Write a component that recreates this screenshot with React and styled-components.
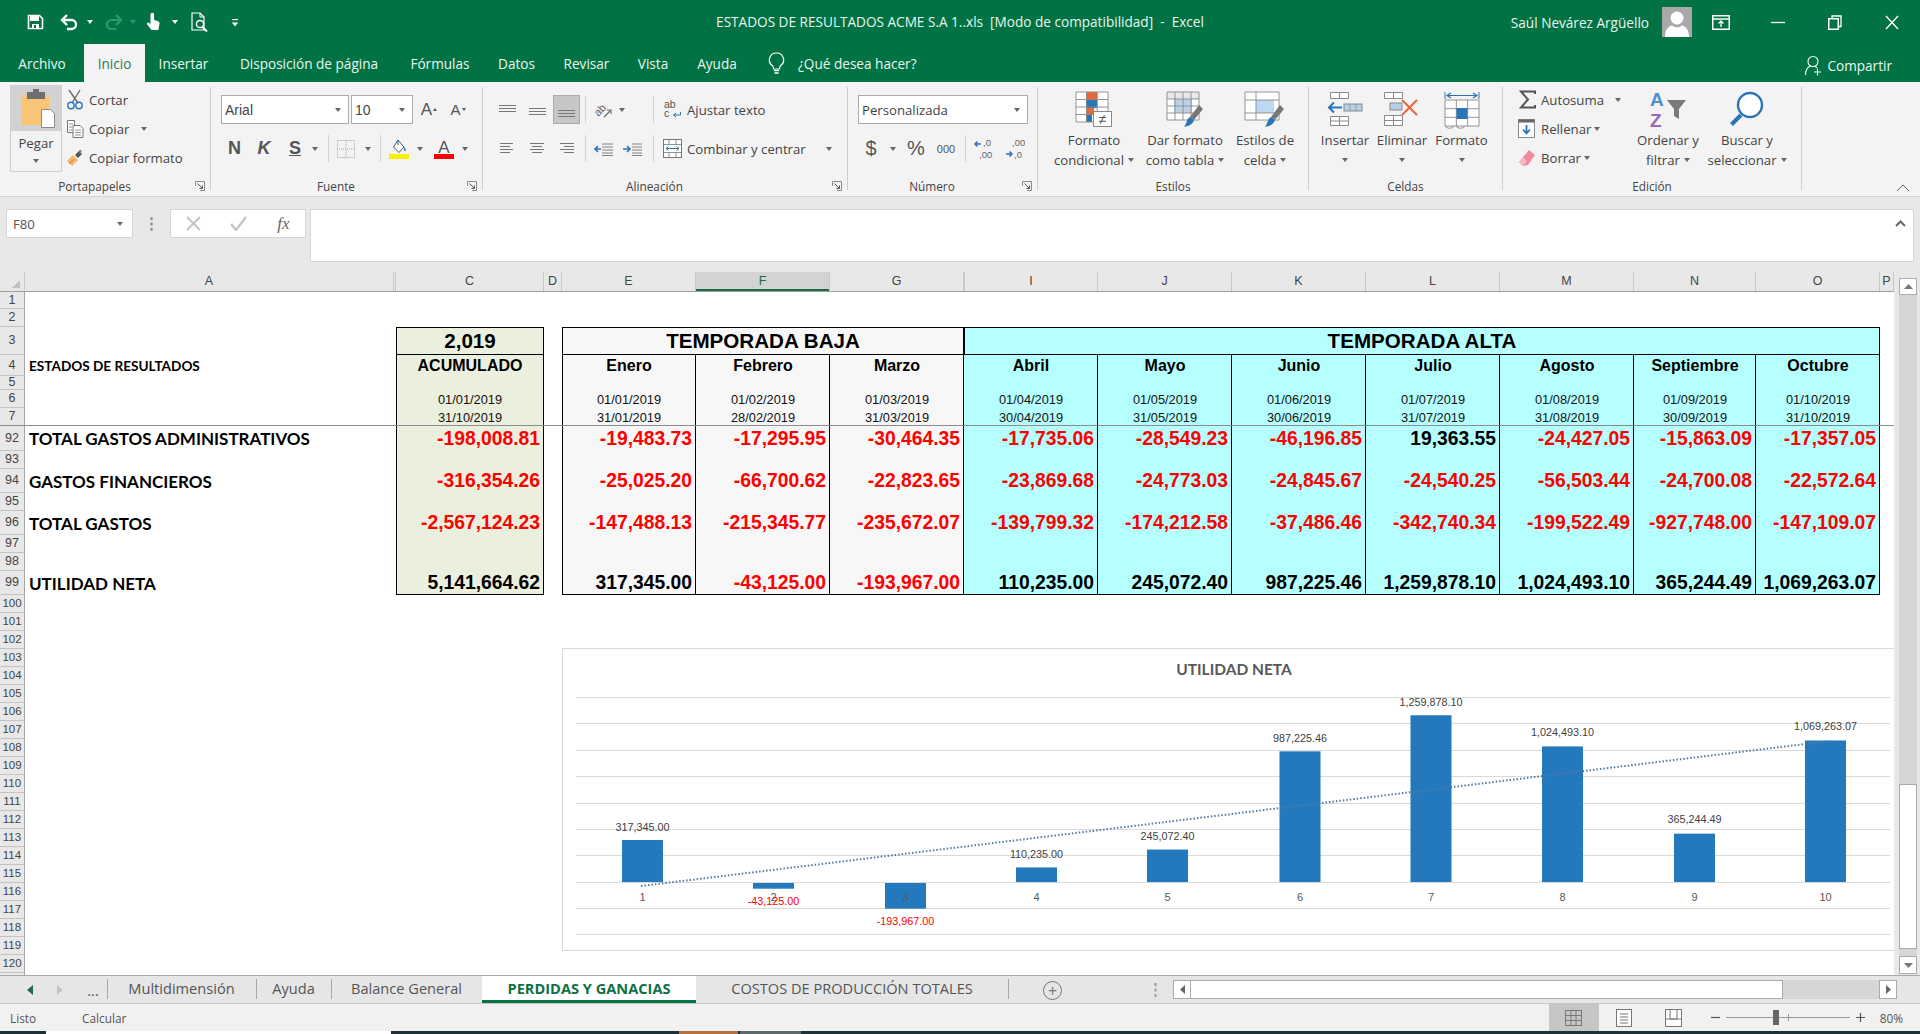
import React from 'react';
import styled, { createGlobalStyle } from 'styled-components';

const GREEN = '#017244';
const UI = '"Open Sans", "Noto Sans", sans-serif';
const ARIAL = '"Liberation Sans", Arial, sans-serif';
const CAL = 'Lato, "Open Sans", sans-serif';

const Global = createGlobalStyle`
  html, body { margin: 0; padding: 0; width: 100%; height: 100%; overflow: hidden; background: #fff; }
  * { box-sizing: border-box; }
`;

const Page = styled.div`
  width: 1920px; height: 1034px; display: flex; flex-direction: column; overflow: hidden;
  font-family: ${UI}; color: #444;
`;

const Svg = styled.svg`display: block; flex: none;`;
const Ic = ({ w, h, children }) => (
  <Svg width={w} height={h} viewBox={`0 0 ${w} ${h}`} fill="none">{children}</Svg>
);

/* ---------- generic pieces ---------- */
const Slot = styled.span`
  display: inline-flex; align-items: center; justify-content: center; flex: none;
  width: ${p => p.$w}px; margin-left: ${p => p.$ml || 0}px;
`;
const Caret = styled.i`
  display: inline-block; width: 0; height: 0; flex: none;
  border-left: 3.5px solid transparent; border-right: 3.5px solid transparent;
  border-top: 4px solid ${p => p.$c || '#666'};
  margin-left: ${p => p.$ml || 0}px;
`;
const VBar = styled.span`
  flex: none; width: 1px; height: 27px; background: #d2d2d2; margin-left: ${p => p.$ml || 0}px;
`;

/* ---------- title bar ---------- */
const TitleBar = styled.header`
  height: 44px; background: ${GREEN}; color: #fff; display: grid; grid-template-columns: 1fr auto 1fr;
  align-items: center; font-size: 14px;
`;
const Qat = styled.div`display: flex; align-items: center; padding-left: 26px; height: 42px;`;
const DocTitle = styled.div`font-size: 13.6px; white-space: pre; color: #e8f5ee; padding-bottom: 2px;`;
const UserArea = styled.div`display: flex; align-items: center; justify-content: flex-end; height: 44px;`;
const UserName = styled.span`font-size: 13.6px; color: #e8f5ee;`;
const Avatar = styled.span`
  width: 30px; height: 30px; margin-left: 13px; background: #a9a9a9; overflow: hidden; display: block;
`;
const WinBtn = styled.span`
  width: 57px; height: 44px; display: flex; align-items: center; justify-content: center;
  &:first-of-type { margin-left: 14px; }
`;

/* ---------- tabs ---------- */
const TabRow = styled.nav`
  height: 38px; background: ${GREEN}; display: flex; align-items: stretch; color: #eaf6f0; font-size: 13.6px;
`;
const Tab = styled.span`
  width: ${p => p.$w}px; display: flex; align-items: center; justify-content: center; flex: none;
  ${p => p.$on && 'background:#f3f3f3;color:#2c7a56;'}
`;
const TellMe = styled.span`display: flex; align-items: center; gap: 13px; margin-left: 16px; color: #eaf6f0;`;
const Share = styled.span`
  margin-left: auto; display: flex; align-items: center; gap: 5px; padding: 4px 28px 0 0;
`;

/* ---------- ribbon ---------- */
const Ribbon = styled.section`
  height: 114px; background: #f3f3f3; display: flex; color: #444; font-size: 13.2px; flex: none;
`;
const Group = styled.div`
  width: ${p => p.$w}px; flex: none; display: flex; flex-direction: column;
`;
const GroupBody = styled.div`
  height: 95px; padding-top: ${p => p.$pt ?? 13}px; padding-left: ${p => p.$pl || 0}px;
  display: ${p => p.$flex ? 'flex' : 'block'}; align-items: flex-start;
`;
const GroupFoot = styled.div`
  height: 18px; display: flex; align-items: center; font-size: 11.8px; color: #444;
`;
const FootLabel = styled.span`flex: 1; text-align: center;`;
const Launcher = styled.span`width: 21px; display: flex; justify-content: center;`;
const GroupSep = styled.span`flex: none; width: 1px; background: #cfcfcf; margin: 5px 0 6px;`;
const ToolRow = styled.div`
  display: flex; align-items: center; height: 29px; margin-top: ${p => p.$mt || 0}px;
`;
const Select = styled.span`
  width: ${p => p.$w}px; margin-left: ${p => p.$ml || 0}px; height: 29px; flex: none;
  background: #fff; border: 1px solid #ababab; display: flex; align-items: center;
  justify-content: space-between; padding: 0 7px 0 3px; font-size: 13.4px;
`;
const SelFont = styled.span`font-family: ${p => p.$arial ? ARIAL : UI}; font-size: ${p => p.$arial ? 14 : 13.2}px;`;
const Toggle = styled.span`
  width: 27px; height: 29px; margin-left: ${p => p.$ml || 0}px; flex: none; background: #c6c6c6;
  border: 1px solid #ababab; display: flex; align-items: center; justify-content: center;
`;
const Letter = styled.span`
  font-family: ${ARIAL}; font-weight: ${p => p.$b ? 700 : 400}; font-style: ${p => p.$i ? 'italic' : 'normal'};
  text-decoration: ${p => p.$u ? 'underline' : 'none'}; font-size: ${p => p.$s || 16}px; color: ${p => p.$c || '#555'};
`;
const Grow = styled.span`
  display: flex; align-items: flex-start;
`;
const TinyUp = styled.i`
  display: inline-block; width: 0; height: 0; margin: 0 0 0 1px;
  border-left: 2.5px solid transparent; border-right: 2.5px solid transparent;
  ${p => p.$down ? 'border-top: 3px solid #555;' : 'border-bottom: 3px solid #555;'}
`;
const RowText = styled.span`
  margin-left: ${p => p.$ml || 0}px; width: ${p => p.$w ? p.$w + 'px' : 'auto'}; white-space: nowrap; flex: none;
`;

const Paste = styled.div`
  width: 52px; height: 87px; margin-left: 10px; flex: none; border: 1px solid #cfcfcf; border-top: 0;
  display: flex; flex-direction: column; align-items: center; text-align: center;
`;
const PasteTop = styled.div`width: 52px; margin-left: -1px; margin-right: -1px; height: 46px; background: #d2d2d2; flex: none;`;
const PasteLabel = styled.span`margin-top: 2px; line-height: 20px;`;
const PasteCaret = styled.span`margin-top: 6px; display: flex;`;
const ListCol = styled.div`
  margin-left: ${p => p.$ml || 0}px; width: ${p => p.$w ? p.$w + 'px' : 'auto'}; flex: none;
`;

const Big = styled.div`
  width: ${p => p.$w}px; margin-left: ${p => p.$ml || 0}px; flex: none; display: flex; flex-direction: column;
  align-items: center; white-space: nowrap;
`;
const BigIcon = styled.div`height: 48px; padding-top: 9px; display: flex; justify-content: center;`;
const BigLine = styled.span`
  height: 20px; line-height: 20px; display: flex; align-items: center; gap: 4px;
`;
const CollapseArea = styled.div`flex: 1; display: flex; align-items: flex-end; justify-content: flex-end; padding: 0 10px 4px 0;`;

/* ---------- formula bar ---------- */
const FormulaBar = styled.section`
  height: 76px; flex: none; background: #e8e8e8; border-top: 1px solid #d4d4d4; padding: 12px 6px 0 6px;
  display: flex; align-items: flex-start;
`;
const NameBox = styled.div`
  width: 127px; height: 29px; background: #fff; border: 1px solid #d6d6d6; display: flex; align-items: center;
  justify-content: space-between; padding: 0 9px 0 6px; font-size: 13.2px; color: #555; flex: none;
`;
const Dots = styled.span`width: 37px; display: flex; justify-content: center; height: 29px; align-items: center; flex: none;`;
const FxBox = styled.div`
  width: 136px; height: 29px; background: #fff; border: 1px solid #d6d6d6; display: flex; align-items: center; flex: none;
`;
const FxSlot = styled(Slot)``;
const FxGlyph = styled.span`
  font-family: "Liberation Serif", serif; font-style: italic; font-size: 17px; color: #666;
`;
const FormulaInput = styled.div`
  width: 1604px; margin-left: 4px; height: 53px; background: #fff; border: 1px solid #d6d6d6; flex: none;
  display: flex; justify-content: flex-end; padding: 10px 7px 0 0;
`;

/* ---------- sheet ---------- */
const COLS = '25px 369px 2px 148px 18px 134px 134px 134px 134px 134px 134px 134px 134px 122px 124px 14px';
const HEIGHTS = [17, 18, 28, 21, 14, 18, 18, 25, 18, 24, 18, 24, 18, 18, 24];
const ROWS = [...HEIGHTS, ...Array(22).fill(18)].map(h => h + 'px').join(' ');

const Work = styled.div`display: flex; height: 703px; flex: none;`;
const SheetCol = styled.div`width: 1894px; flex: none; display: flex; flex-direction: column;`;
const ColHead = styled.div`
  height: 20px; flex: none; display: grid; grid-template-columns: ${COLS}; background: #e8e8e8;
  border-bottom: 1px solid #9e9e9e;
`;
const ColCell = styled.span`
  display: flex; align-items: center; justify-content: center; font-family: ${ARIAL}; font-size: 12.5px; color: #444;
  border-right: 1px solid #c8c8c8; line-height: 1;
  ${p => p.$sel && 'background:#d3d3d3;color:#1d6b47;box-shadow: inset 0 -2px 0 #1d6b47;'}
  ${p => p.$dbl && 'border-left:1px solid #c8c8c8;'}
`;
const Corner = styled.span`
  border-right: 1px solid #c8c8c8; display: flex; align-items: flex-end; justify-content: flex-end; padding: 0 4px 3px 0;
`;
const SheetBody = styled.div`
  position: relative; height: 683px; overflow: hidden; background: #fff;
`;
const Grid = styled.div`
  display: grid; grid-template-columns: ${COLS}; grid-template-rows: ${ROWS};
`;
const RowHead = styled.span`
  grid-column: 1; grid-row: ${p => p.$r}; background: #e8e8e8; border-right: 1px solid #a6a6a6;
  border-bottom: 1px solid #c4c4c4; display: flex; align-items: center; justify-content: center;
  font-family: ${ARIAL}; font-size: ${p => p.$small ? 11.5 : 12.5}px; color: #444; line-height: 1; overflow: hidden;
`;
const Band = styled.div`
  grid-column: ${p => p.$c}; grid-row: 4 / 16; background: ${p => p.$bg};
  border-right: 1px solid #000; border-bottom: 1px solid #000;
  ${p => p.$first && 'border-left: 1px solid #000;'}
`;
const Banner = styled.div`
  grid-column: ${p => p.$c} / span ${p => p.$span}; grid-row: 3; background: ${p => p.$bg};
  border: 1px solid #000; display: flex; align-items: center; justify-content: center;
  font-family: ${ARIAL}; font-weight: 700; font-size: 20.6px; color: #000;
`;
const MonthCell = styled.div`
  grid-column: ${p => p.$c}; grid-row: ${p => p.$r}; display: flex; align-items: center; justify-content: center;
  font-family: ${ARIAL}; font-weight: 700; font-size: 16px; color: #000;
`;
const DateCell = styled.div`
  grid-column: ${p => p.$c}; grid-row: ${p => p.$r}; display: flex; align-items: center; justify-content: center;
  font-family: ${ARIAL}; font-size: 12.8px; color: #111; padding-top: 1px;
`;
const Value = styled.div`
  grid-column: ${p => p.$c}; grid-row: ${p => p.$r}; display: flex; align-items: center; justify-content: flex-end;
  padding-right: 4px; font-family: ${ARIAL}; font-weight: 700; font-size: 19.3px; color: ${p => p.$neg ? '#f00' : '#000'};
  white-space: nowrap;
`;
const RowLabel = styled.div`
  grid-column: 2; grid-row: ${p => p.$r}; display: flex; align-items: center; padding-left: 4px;
  font-family: ${CAL}; font-weight: 700; font-size: ${p => p.$s || 17}px; color: #000; white-space: nowrap;
`;
const FreezeLine = styled.div`
  grid-column: 1 / -1; grid-row: 7; align-self: end; height: 1px; background: #8c8c8c; position: relative;
`;
const ChartFrame = styled.div`
  position: absolute; left: 562px; top: 356px; width: 1332px; height: 303px; background: #fff;
  border: 1px solid #d9d9d9; border-right: 0;
`;

const VScroll = styled.aside`
  width: 26px; flex: none; background: #e8e8e8; padding: 6px 3px 1px 5px; display: flex;
`;
const VTrack = styled.div`
  flex: 1; background: #d6d6d6; display: flex; flex-direction: column; justify-content: flex-start;
`;
const VBtn = styled.div`
  height: ${p => p.$h}px; flex: none; background: #fff; border: 1px solid #ababab; display: flex;
  align-items: center; justify-content: center;
`;
const VThumb = styled.div`height: 165px; flex: none; background: #fff; border: 1px solid #ababab; margin-top: auto; margin-bottom: 7px;`;

/* ---------- sheet tabs + status ---------- */
const TabBar = styled.section`
  height: 29px; flex: none; background: #e6e6e6; border-top: 1px solid #a8a8a8; border-bottom: 1px solid #c6c6c6;
  display: flex; align-items: stretch; font-size: 14.6px; color: #555;
`;
const NavSlot = styled(Slot)`align-self: center;`;
const SheetTab = styled.span`
  width: ${p => p.$w}px; flex: none; display: flex; align-items: center; justify-content: center; white-space: nowrap;
  padding-bottom: 3px; position: relative;
  ${p => p.$on ? `background:#fff;color:#0f7045;font-weight:700;border-bottom:3px solid ${GREEN};padding-bottom:0;` : ''}
  ${p => p.$sep ? `&::before{content:'';position:absolute;left:0;top:3px;height:20px;width:1px;background:#a6a6a6;}` : ''}
`;
const TabEndBar = styled.span`width: 1px; height: 20px; background: #a6a6a6; align-self: flex-start; margin-top: 3px; flex: none;`;
const AddSheet = styled.span`
  width: 19px; height: 19px; border: 1px solid #777; border-radius: 50%; margin-left: 34px; align-self: center; flex: none;
  display: flex; align-items: center; justify-content: center; color: #777; font-size: 16px; line-height: 1; margin-top: 2px;
`;
const HScroll = styled.div`
  margin-left: 0; width: 724px; height: 19px; align-self: flex-start; margin-top: 4px; background: #d6d6d6;
  display: flex; flex: none;
`;
const HEnd = styled.span`
  width: 18px; flex: none; background: #fff; border: 1px solid #ababab; display: flex; align-items: center; justify-content: center;
`;
const HThumb = styled.span`width: 592px; flex: none; background: #fff; border: 1px solid #ababab; border-left: 0;`;

const StatusBar = styled.footer`
  height: 27px; flex: none; background: #f1f1f1; display: flex; align-items: stretch; font-size: 11.8px; color: #555;
`;
const StatusText = styled.span`align-self: center; margin-left: ${p => p.$ml}px; flex: none;`;
const ViewBtn = styled.span`
  width: 50px; flex: none; display: flex; align-items: center; justify-content: center;
  ${p => p.$on && 'background:#c6c6c6;'} margin-left: ${p => p.$ml || 0}px;
`;
const ZoomWrap = styled.span`display: flex; align-items: center; margin-left: 12px;`;
const ZoomTrack = styled.span`
  width: 124px; height: 1px; background: #999; margin: 0 6px; position: relative; display: block;
`;
const ZoomThumb = styled.span`
  position: absolute; left: 47px; top: -7px; width: 6px; height: 15px; background: #666;
`;
const ZoomTick = styled.span`
  position: absolute; left: 62px; top: -3px; width: 1px; height: 7px; background: #999;
`;
const ZoomPct = styled.span`margin-left: 15px;`;
const TaskStrip = styled.div`height: 3px; flex: 1; background: #1e3038; display: flex; overflow: hidden;`;
const TaskPiece = styled.span`
  height: 3px; width: ${p => p.$w}px; margin-left: ${p => p.$ml}px; background: ${p => p.$c}; flex: none;
`;

/* ---------- icons ---------- */
const W = '#fff';
const SaveI = () => <Ic w={17} h={16}><path d="M1.5 1.5h11l3 3v10h-14z" stroke={W} strokeWidth="1.6"/><rect x="3" y="2" width="9" height="5" fill={W}/><rect x="5" y="10" width="7" height="5" fill={W}/><rect x="7" y="11" width="2" height="3" fill={GREEN}/></Ic>;
const UndoI = ({ c = W }) => <Ic w={20} h={17}><path d="M2.5 6h9a4.5 4.5 0 0 1 0 9H7" stroke={c} strokeWidth="2.4"/><path d="M7 1L2 6l5 5" stroke={c} strokeWidth="2.4"/></Ic>;
const RedoI = ({ c = '#2f9a6c' }) => <Ic w={20} h={17}><path d="M17.5 6h-9a4.5 4.5 0 0 0 0 9H13" stroke={c} strokeWidth="2.2"/><path d="M13 1l5 5-5 5" stroke={c} strokeWidth="2.2"/></Ic>;
const TouchI = () => <Ic w={15} h={20}><path d="M4.5 2.5a1.8 1.8 0 0 1 3.6 0v5.6l3.5 1c1.6.5 2.2 1.6 1.9 3L12.4 18H5.6L1.2 12.5c-.9-1.3.8-2.8 2-1.6l1.3 1.3z" fill={W}/></Ic>;
const PreviewI = () => <Ic w={19} h={21}><path d="M1 1h8l4 4v13H1z" stroke={W} strokeWidth="1.2"/><path d="M9 1v4h4" stroke={W}/><circle cx="9" cy="12" r="3.6" stroke={W} strokeWidth="1.5"/><path d="M11.5 15l4.5 4.5" stroke={W} strokeWidth="2"/></Ic>;
const CustomI = () => <Ic w={8} h={9}><rect x="1" y="1" width="6" height="1.2" fill={W}/><path d="M0.8 4.5h6.4L4 8.5z" fill={W}/></Ic>;
const PersonI = () => <Ic w={30} h={30}><circle cx="15" cy="11" r="6.5" fill={W}/><path d="M3 30c0-8 4-11 7-11.5 3 2.500 7 2.500 10 0 3 .5 7 3.500 7 11.500z" fill={W}/></Ic>;
const RibbonOptI = () => <Ic w={18} h={15}><rect x=".75" y=".75" width="16.500" height="13.500" stroke={W} strokeWidth="1.5"/><path d="M1 4h16" stroke={W} strokeWidth="1.500"/><path d="M9 12V6.500M6.500 8.500L9 6l2.500 2.500" stroke={W} strokeWidth="1.300"/></Ic>;
const MinI = () => <Ic w={14} h={3}><path d="M0 1.500h14" stroke={W} strokeWidth="1.300"/></Ic>;
const RestoreI = () => <Ic w={14} h={15}><rect x=".75" y="3.750" width="9.500" height="10.500" stroke={W} strokeWidth="1.500"/><path d="M4 3.500V1h9v10.500h-2.500" stroke={W} strokeWidth="1.300"/></Ic>;
const CloseI = () => <Ic w={14} h={15}><path d="M1 1l12 13M13 1L1 14" stroke={W} strokeWidth="1.400"/></Ic>;
const BulbI = () => <Ic w={17} h={22}><path d="M8.500 1a7 7 0 0 0-4 12.800c.8.700 1 1.700 1 3.200h6c0-1.500.2-2.500 1-3.200a7 7 0 0 0-4-12.800z" stroke={W} strokeWidth="1.200"/><path d="M6 18.500h5M6.500 21h4" stroke={W} strokeWidth="1.500"/></Ic>;
const ShareI = () => <Ic w={18} h={21}><circle cx="9" cy="6.500" r="5" stroke={W} strokeWidth="1.100"/><path d="M1.500 20c0-5 2.500-8 5-9M11 11.500c.8.300 1.500.8 2 1.300" stroke={W} strokeWidth="1.100"/><path d="M10 17h7M13.500 13.500v7" stroke={W} strokeWidth="1.100"/></Ic>;

const PasteI = () => <Ic w={52} h={46}><rect x="12" y="10" width="27" height="30" fill="#f8c476"/><rect x="17" y="7" width="18" height="7" fill="#6f6f6f"/><rect x="23" y="4" width="6" height="4" fill="#6f6f6f"/><path d="M31.500 24.500h9l4 4v14h-13z" fill="#fff" stroke="#8a8a8a"/></Ic>;
const ScissorsI = () => <Ic w={18} h={21}><path d="M3 1l9 13M14 1L6 14" stroke="#6d6d6d" strokeWidth="1.400"/><circle cx="5" cy="16.500" r="3.200" stroke="#2a74b9" strokeWidth="1.400"/><circle cx="13" cy="16.500" r="3.200" stroke="#2a74b9" strokeWidth="1.400"/></Ic>;
const CopyI = () => <Ic w={18} h={19}><path d="M1.500 1.500h7v12h-7z" stroke="#777" fill="#fff"/><path d="M7 6.500h7l3 3v9H7z" stroke="#777" fill="#fff"/><path d="M9 11h6M9 13.500h6M9 16h6M3 5h4M3 8h3M3 11h3" stroke="#777" strokeWidth=".8"/></Ic>;
const PainterI = () => <Ic w={18} h={18}><path d="M1 12l6-6 5 5-6 6z" fill="#f2b766"/><path d="M3 15l5-5" stroke="#c68a3c"/><path d="M9 6l4-4 3 3-4 4z" fill="#555"/><rect x="13" y="1" width="2.500" height="2.500" fill="#888"/></Ic>;

const LINES = (ys, x1s, x2s) => ys.map((y, i) => <path key={i} d={`M${x1s[i]} ${y + .5}H${x2s[i]}`} stroke="#777" strokeWidth="1"/>);
const VAlignI = ({ top }) => <Ic w={19} h={14}>{LINES([top, top + 3, top + 6], [1, 1, 1], [18, 18, 18])}</Ic>;
const HAlignI = ({ kind }) => {
  const x2 = kind === 'l' ? [14, 11, 14, 11] : [15, 13, 15, 13];
  const x1 = kind === 'l' ? [1, 1, 1, 1] : kind === 'c' ? [1, 3, 1, 3] : [1, 5, 1, 5];
  const xe = kind === 'l' ? x2 : kind === 'c' ? [15, 13, 15, 13] : [15, 15, 15, 15];
  return <Ic w={16} h={13}>{LINES([1, 4, 7, 10], x1, xe)}</Ic>;
};
const OrientI = () => <Ic w={20} h={20}><text x="1" y="13" fontFamily={ARIAL} fontSize="11" fill="#666" transform="rotate(-45 8 10)">ab</text><path d="M11 17l6-6M14 10h4v4" stroke="#666" strokeWidth="1.100"/></Ic>;
const IndentI = ({ rev }) => <Ic w={20} h={14}><path d={rev ? 'M8 2h11M8 5h11M8 8h11M8 11h11M2 13.500h17' : 'M8 2h11M8 5h11M8 8h11M8 11h11M8 13.500h11'} stroke="#777" strokeWidth=".9"/><path d={rev ? 'M7 7H1M4 4L1 7l3 3' : 'M7 7H1M4 4L1 7l3 3'} stroke="#2a74b9" strokeWidth="1.600"/></Ic>;
const IndentR = () => <Ic w={20} h={14}><path d="M10 2h10M10 5h10M10 8h10M10 11h10M10 13.500h10" stroke="#777" strokeWidth=".9"/><path d="M1 7h7M5 4l3 3-3 3" stroke="#2a74b9" strokeWidth="1.600"/></Ic>;
const WrapI = () => <Ic w={18} h={19}><text x="0" y="8" fontFamily={ARIAL} fontSize="10.500" fill="#555">ab</text><text x="0" y="17" fontFamily={ARIAL} fontSize="10.500" fill="#555">c</text><path d="M16.500 12v3h-7M12 13l-2.500 2 2.500 2" stroke="#2a74b9" strokeWidth="1"/></Ic>;
const MergeI = () => <Ic w={19} h={19}><rect x=".5" y=".5" width="18" height="18" stroke="#777" fill="#fff"/><path d="M0 5.500h19M0 13.500h19M6 .5v5M13 .5v5M6 13.500v5M13 13.500v5" stroke="#777" strokeWidth=".8"/><path d="M3 9.500h13M5.500 7.500l-2.500 2 2.500 2M13.500 7.500l2.500 2-2.500 2" stroke="#2a74b9" strokeWidth="1"/></Ic>;
const BorderI = () => <Ic w={18} h={18}><rect x=".5" y=".5" width="17" height="17" stroke="#a8a8a8" strokeDasharray="1 1"/><path d="M9 0v18M0 9h18" stroke="#a8a8a8" strokeDasharray="1 1"/></Ic>;
const FillI = () => <Ic w={20} h={20}><path d="M9 1l6 7-5 5.500L4.500 8z" stroke="#555" fill="#fff"/><path d="M9 6L9 1" stroke="#2a74b9" strokeWidth="1.200"/><path d="M15 8c1.500 1.500 2.500 3 1.500 4-.6.600-2-.5-1.500-4z" fill="#2a74b9"/><rect x="0" y="15" width="20" height="5" fill="#f8f000"/></Ic>;
const FontColorI = () => <Ic w={20} h={20}><text x="10" y="13.500" textAnchor="middle" fontFamily={ARIAL} fontSize="17" fill="#555">A</text><rect x="0" y="15" width="20" height="5" fill="#f00"/></Ic>;
const DecI = ({ more }) => <Ic w={22} h={24}><text x={more ? 9 : 10} y="9" fontFamily={ARIAL} fontSize="9.500" fill="#666">{more ? ',00' : ',0'}</text><text x={more ? 11 : 6} y="21" fontFamily={ARIAL} fontSize="9.500" fill="#666">{more ? ',0' : ',00'}</text>{more ? <path d="M3 17h6M6.500 14.500L9 17l-2.500 2.500" stroke="#2a74b9" strokeWidth="1.500"/> : <path d="M2 7h6M4.500 4.500L2 7l2.500 2.500" stroke="#2a74b9" strokeWidth="1.500"/>}</Ic>;
const LaunchI = () => <Ic w={10} h={10}><path d="M.5 5V.5H9.500V9.500H5" stroke="#8a8a8a"/><path d="M2.500 2.500l5 5M7.500 4.500v3h-3" stroke="#555"/></Ic>;

const G = '#8a8a8a';
const cells = (x, y, w, h, cols, rows, c = G) => {
  const o = [];
  for (let i = 0; i <= cols; i++) o.push(<path key={'v' + i} d={`M${x + i * w / cols} ${y}v${h}`} stroke={c} strokeWidth=".9"/>);
  for (let j = 0; j <= rows; j++) o.push(<path key={'h' + j} d={`M${x} ${y + j * h / rows}h${w}`} stroke={c} strokeWidth=".9"/>);
  return o;
};
const CondI = () => <Ic w={38} h={36}><rect x="1" y="1" width="32" height="30" fill="#fff"/><rect x="11" y="1" width="11" height="8" fill="#e8663a"/><rect x="11" y="9" width="11" height="8" fill="#2a74b9"/><rect x="11" y="17" width="8" height="7" fill="#e8663a"/><rect x="11" y="24" width="6" height="7" fill="#2a74b9"/>{cells(1, 1, 32, 30, 3, 4)}<rect x="18.500" y="20.500" width="18" height="15" fill="#fff" stroke={G}/><text x="27.500" y="32.500" textAnchor="middle" fontFamily={ARIAL} fontSize="14" fill="#555">≠</text></Ic>;
const Brush = ({ x, y }) => <g transform={`translate(${x} ${y})`}><path d="M18 0l4 4-9 11-4-3z" fill="#777"/><path d="M9 12l4 3c-1 4-5 6-10 7 3-3 2-8 6-10z" fill="#2a74b9"/></g>;
const TableFmtI = () => <Ic w={38} h={38}><rect x="1" y="1" width="32" height="28" fill="#fff"/><rect x="8" y="8" width="18" height="14" fill="#bcd2e8"/><rect x="1" y="1" width="32" height="7" fill="#e8e8e8"/>{cells(1, 1, 32, 28, 4, 4)}<Brush x="15" y="14"/></Ic>;
const CellStyleI = () => <Ic w={42} h={38}><rect x="1" y="1" width="34" height="28" fill="#fff"/><rect x="12" y="9" width="18" height="13" fill="#bcd9f3"/><path d="M1 1h34v28H1zM12 1v28M1 9h34M1 22h34" stroke={G} strokeWidth=".9"/><Brush x="18" y="14"/></Ic>;
const InsCellI = () => <Ic w={36} h={36}><path d="M3.500 1.500h18v6h-18z" stroke={G} fill="#fff"/><path d="M12.500 1.500v6" stroke={G}/><rect x="17" y="13" width="18" height="7" fill="#b4d0ea" stroke={G}/><path d="M23 13v7M29 13v7" stroke={G} strokeWidth=".7"/><path d="M15 16.500H2M7 11.500l-5 5 5 5" stroke="#2a74b9" strokeWidth="2"/><path d="M3.500 25.500h18v9h-18zM12.500 25.500v9M3.500 30h18" stroke={G} fill="#fff"/></Ic>;
const DelCellI = () => <Ic w={38} h={36}><path d="M1.500 1.500h18v6h-18z" stroke={G} fill="#fff"/><path d="M10.500 1.500v6" stroke={G}/><rect x="7" y="12" width="12" height="7" fill="#b4d0ea" stroke={G}/><path d="M1.500 24.500h18v10h-18zM10.500 24.500v10M1.500 29.500h18" stroke={G} fill="#fff"/><path d="M19 9l15 15M34 9L19 24" stroke="#e8663a" strokeWidth="2"/></Ic>;
const FmtCellI = () => <Ic w={36} h={38}><path d="M1 1v7M35 1v7" stroke="#2a74b9"/><path d="M3 4.500h30M7 2l-4 2.500L7 7M29 2l4 2.500L29 7" stroke="#2a74b9" strokeWidth="1.200"/><rect x="1" y="9" width="34" height="26" fill="#fff"/>{cells(1, 9, 34, 26, 3, 3)}<rect x="12.500" y="17" width="11" height="11" fill="#2a74b9"/><path d="M1 35c3 3 6 3 9 0M12 35c3 3 6 3 9 0" stroke={G}/></Ic>;
const SigmaI = () => <Ic w={17} h={19}><path d="M16 4V1.500H2L9 9.500 2 17.500h14V15" stroke="#555" strokeWidth="2"/></Ic>;
const FillDownI = () => <Ic w={18} h={19}><rect x=".5" y=".5" width="16" height="18" fill="#fff" stroke="#8a8a8a"/><rect x=".5" y=".5" width="16" height="3" fill="#666"/><path d="M8.500 6v8M5 10.500l3.500 4 3.500-4" stroke="#2a74b9" strokeWidth="1.800"/></Ic>;
const EraserI = () => <Ic w={18} h={18}><path d="M11 1l6 5-7 10-5 1-4-4z" fill="#f28b9e"/><path d="M1 13l4 4 4-5-4-4z" fill="#f6b8c3"/></Ic>;
const SortI = () => <Ic w={38} h={38}><text x="1" y="15" fontFamily={ARIAL} fontWeight="700" fontSize="19" fill="#4f8fd0">A</text><text x="1" y="36" fontFamily={ARIAL} fontWeight="700" fontSize="19" fill="#9a6bb8">Z</text><path d="M18 9h19l-7 9v10l-5-3v-7z" fill="#7a7a7a"/></Ic>;
const SearchI = () => <Ic w={36} h={36}><circle cx="21" cy="14" r="12" stroke="#2a74b9" strokeWidth="2.400" fill="#fff"/><path d="M12 24L2.500 33.500" stroke="#2a74b9" strokeWidth="4"/></Ic>;

/* ---------- data ---------- */
const MONTHS = [
  { c: 6, n: 'Enero', d: ['01/01/2019', '31/01/2019'], v: ['-19,483.73', '-25,025.20', '-147,488.13', '317,345.00'] },
  { c: 7, n: 'Febrero', d: ['01/02/2019', '28/02/2019'], v: ['-17,295.95', '-66,700.62', '-215,345.77', '-43,125.00'] },
  { c: 8, n: 'Marzo', d: ['01/03/2019', '31/03/2019'], v: ['-30,464.35', '-22,823.65', '-235,672.07', '-193,967.00'] },
  { c: 9, n: 'Abril', d: ['01/04/2019', '30/04/2019'], v: ['-17,735.06', '-23,869.68', '-139,799.32', '110,235.00'] },
  { c: 10, n: 'Mayo', d: ['01/05/2019', '31/05/2019'], v: ['-28,549.23', '-24,773.03', '-174,212.58', '245,072.40'] },
  { c: 11, n: 'Junio', d: ['01/06/2019', '30/06/2019'], v: ['-46,196.85', '-24,845.67', '-37,486.46', '987,225.46'] },
  { c: 12, n: 'Julio', d: ['01/07/2019', '31/07/2019'], v: ['19,363.55', '-24,540.25', '-342,740.34', '1,259,878.10'] },
  { c: 13, n: 'Agosto', d: ['01/08/2019', '31/08/2019'], v: ['-24,427.05', '-56,503.44', '-199,522.49', '1,024,493.10'] },
  { c: 14, n: 'Septiembre', d: ['01/09/2019', '30/09/2019'], v: ['-15,863.09', '-24,700.08', '-927,748.00', '365,244.49'] },
  { c: 15, n: 'Octubre', d: ['01/10/2019', '31/10/2019'], v: ['-17,357.05', '-22,572.64', '-147,109.07', '1,069,263.07'] },
];
const ACUM = { c: 4, n: 'ACUMULADO', d: ['01/01/2019', '31/10/2019'], v: ['-198,008.81', '-316,354.26', '-2,567,124.23', '5,141,664.62'] };
const VALUE_ROWS = [8, 10, 12, 15];
const ROW_NUMS = [1, 2, 3, 4, 5, 6, 7, ...Array.from({ length: 30 }, (_, i) => 92 + i)];
const COL_HEADS = [['A'], [''], ['C'], ['D'], ['E'], ['F', 'sel'], ['G'], ['I', 'dbl'], ['J'], ['K'], ['L'], ['M'], ['N'], ['O'], ['P']];

const BAR_W = 41, BASE = 882, SCALE = 42 / 317345;
const BARS = [
  [622, 317345, '317,345.00', 827], [753, -43125, '-43,125.00', 901], [885, -193967, '-193,967.00', 921],
  [1016, 110235, '110,235.00', 854], [1147, 245072.4, '245,072.40', 836], [1279.500, 987225.46, '987,225.46', 738],
  [1410.500, 1259878.1, '1,259,878.10', 702], [1542, 1024493.1, '1,024,493.10', 732], [1674, 365244.49, '365,244.49', 819],
  [1805, 1069263.07, '1,069,263.07', 726],
];
const GRID_Y = [697, 723, 750, 776, 803, 829, 855, 882, 908, 934];

const Chart = () => (
  <Svg width={1331} height={301} viewBox="563 649 1331 301">
    <text x="1234" y="675" textAnchor="middle" fontFamily={CAL} fontWeight="700" fontSize="15.500" fill="#595959">UTILIDAD NETA</text>
    {GRID_Y.map(y => <path key={y} d={`M576 ${y + .5}H1890`} stroke="#d9d9d9" strokeWidth="1"/>)}
    {BARS.map(([x, v], i) => {
      const h = Math.abs(v) * SCALE;
      return <rect key={i} x={x} y={v > 0 ? BASE - h : BASE + 1} width={BAR_W} height={h} fill="#2479bd"/>;
    })}
    {BARS.map(([x], i) => <text key={i} x={x + 20.500} y="901" textAnchor="middle" fontFamily={ARIAL} fontSize="11" fill="#595959">{i + 1}</text>)}
    <path d="M641 886L1830 741" stroke="#4e7aa6" strokeWidth="2" strokeDasharray="1.500 2"/>
    {BARS.map(([x, v, t, y], i) => <text key={i} x={x + 20.500} y={y + 4} textAnchor="middle" fontFamily={ARIAL} fontSize="10.800" fill={v < 0 ? '#f00' : '#404040'}>{t}</text>)}
  </Svg>
);

/* ---------- ribbon sections ---------- */
const Clipboard = () => (
  <Group $w={210}>
    <GroupBody $pt={3} $flex>
      <Paste>
        <PasteTop><PasteI/></PasteTop>
        <PasteLabel>Pegar</PasteLabel>
        <PasteCaret><Caret/></PasteCaret>
      </Paste>
      <ListCol $ml={4}>
        <ToolRow><Slot $w={18}><ScissorsI/></Slot><RowText $ml={5}>Cortar</RowText></ToolRow>
        <ToolRow><Slot $w={18}><CopyI/></Slot><RowText $ml={5}>Copiar</RowText><Caret $ml={12}/></ToolRow>
        <ToolRow><Slot $w={18}><PainterI/></Slot><RowText $ml={5}>Copiar formato</RowText></ToolRow>
      </ListCol>
    </GroupBody>
    <GroupFoot><FootLabel>Portapapeles</FootLabel><Launcher><LaunchI/></Launcher></GroupFoot>
  </Group>
);

const FontGroup = () => (
  <Group $w={271}>
    <GroupBody $pl={10}>
      <ToolRow>
        <Select $w={128}><SelFont $arial>Arial</SelFont><Caret/></Select>
        <Select $w={62} $ml={2}><SelFont $arial>10</SelFont><Caret/></Select>
        <Slot $w={28} $ml={2}><Letter $s={17}>A</Letter><Grow><TinyUp/></Grow></Slot>
        <Slot $w={30}><Letter $s={15}>A</Letter><Grow><TinyUp $down/></Grow></Slot>
      </ToolRow>
      <ToolRow $mt={10}>
        <Slot $w={27}><Letter $b $s={18}>N</Letter></Slot>
        <Slot $w={32}><Letter $b $i $s={18}>K</Letter></Slot>
        <Slot $w={30}><Letter $b $u $s={18}>S</Letter></Slot>
        <Slot $w={10}><Caret/></Slot>
        <VBar $ml={8}/>
        <Slot $w={28} $ml={3}><BorderI/></Slot>
        <Slot $w={10} $ml={3}><Caret/></Slot>
        <VBar $ml={7}/>
        <Slot $w={28} $ml={4}><FillI/></Slot>
        <Slot $w={10} $ml={2}><Caret/></Slot>
        <Slot $w={28} $ml={5}><FontColorI/></Slot>
        <Slot $w={10} $ml={2}><Caret/></Slot>
      </ToolRow>
    </GroupBody>
    <GroupFoot><FootLabel>Fuente</FootLabel><Launcher><LaunchI/></Launcher></GroupFoot>
  </Group>
);

const AlignGroup = () => (
  <Group $w={364}>
    <GroupBody $pl={11}>
      <ToolRow>
        <Slot $w={26}><VAlignI top={2}/></Slot>
        <Slot $w={26} $ml={4}><VAlignI top={5}/></Slot>
        <Toggle $ml={3}><VAlignI top={7}/></Toggle>
        <VBar $ml={5}/>
        <Slot $w={22} $ml={6}><OrientI/></Slot>
        <Slot $w={10} $ml={3}><Caret/></Slot>
        <VBar $ml={26}/>
        <Slot $w={18} $ml={10}><WrapI/></Slot>
        <RowText $ml={5}>Ajustar texto</RowText>
      </ToolRow>
      <ToolRow $mt={10}>
        <Slot $w={26}><HAlignI kind="l"/></Slot>
        <Slot $w={26} $ml={4}><HAlignI kind="c"/></Slot>
        <Slot $w={26} $ml={4}><HAlignI kind="r"/></Slot>
        <VBar $ml={5}/>
        <Slot $w={22} $ml={7}><IndentI/></Slot>
        <Slot $w={22} $ml={6}><IndentR/></Slot>
        <VBar $ml={10}/>
        <Slot $w={20} $ml={8}><MergeI/></Slot>
        <RowText $ml={5} $w={126}>Combinar y centrar</RowText>
        <Slot $w={10} $ml={11}><Caret/></Slot>
      </ToolRow>
    </GroupBody>
    <GroupFoot><FootLabel>Alineación</FootLabel><Launcher><LaunchI/></Launcher></GroupFoot>
  </Group>
);

const NumberGroup = () => (
  <Group $w={189}>
    <GroupBody $pl={10}>
      <ToolRow><Select $w={170}><SelFont>Personalizada</SelFont><Caret/></Select></ToolRow>
      <ToolRow $mt={10}>
        <Slot $w={26}><Letter $s={20}>$</Letter></Slot>
        <Slot $w={10} $ml={4}><Caret/></Slot>
        <Slot $w={28} $ml={4}><Letter $s={20}>%</Letter></Slot>
        <Slot $w={28} $ml={2}><Letter $s={11}>000</Letter></Slot>
        <VBar $ml={5}/>
        <Slot $w={24} $ml={6}><DecI/></Slot>
        <Slot $w={24} $ml={6}><DecI more/></Slot>
      </ToolRow>
    </GroupBody>
    <GroupFoot><FootLabel>Número</FootLabel><Launcher><LaunchI/></Launcher></GroupFoot>
  </Group>
);

const BigBtn = ({ w, ml, icon, a, b, caretOnly }) => (
  <Big $w={w} $ml={ml}>
    <BigIcon>{icon}</BigIcon>
    <BigLine>{a}</BigLine>
    <BigLine>{b}{(b || caretOnly) && <Caret/>}</BigLine>
  </Big>
);

const StylesGroup = () => (
  <Group $w={270}>
    <GroupBody $pt={0} $pl={10} $flex>
      <BigBtn w={92} icon={<CondI/>} a="Formato" b="condicional"/>
      <BigBtn w={90} icon={<TableFmtI/>} a="Dar formato" b="como tabla"/>
      <BigBtn w={66} ml={2} icon={<CellStyleI/>} a="Estilos de" b="celda"/>
    </GroupBody>
    <GroupFoot><FootLabel>Estilos</FootLabel></GroupFoot>
  </Group>
);

const CellsGroup = () => (
  <Group $w={193}>
    <GroupBody $pt={0} $pl={7} $flex>
      <BigBtn w={58} icon={<InsCellI/>} a="Insertar" caretOnly/>
      <BigBtn w={56} icon={<DelCellI/>} a="Eliminar" caretOnly/>
      <BigBtn w={63} icon={<FmtCellI/>} a="Formato" caretOnly/>
    </GroupBody>
    <GroupFoot><FootLabel>Celdas</FootLabel></GroupFoot>
  </Group>
);

const EditGroup = () => (
  <Group $w={298}>
    <GroupBody $pt={3} $pl={14} $flex>
      <ListCol $w={118}>
        <ToolRow><Slot $w={20}><SigmaI/></Slot><RowText $ml={4}>Autosuma</RowText><Caret $ml={11}/></ToolRow>
        <ToolRow><Slot $w={20}><FillDownI/></Slot><RowText $ml={4}>Rellenar</RowText><Caret $ml={3}/></ToolRow>
        <ToolRow><Slot $w={20}><EraserI/></Slot><RowText $ml={4}>Borrar</RowText><Caret $ml={3}/></ToolRow>
      </ListCol>
      <BigStack>
        <BigBtn w={66} icon={<SortI/>} a="Ordenar y" b="filtrar"/>
        <BigBtn w={92} icon={<SearchI/>} a="Buscar y" b="seleccionar"/>
      </BigStack>
    </GroupBody>
    <GroupFoot><FootLabel>Edición</FootLabel></GroupFoot>
  </Group>
);
const BigStack = styled.div`display: flex; margin-top: -3px; flex: none;`;

export default function App() {
  return (
    <Page>
      <Global/>
      <TitleBar>
        <Qat>
          <Slot $w={18}><SaveI/></Slot>
          <Slot $w={24} $ml={14}><UndoI/></Slot>
          <Slot $w={10} $ml={3}><Caret $c="#fff"/></Slot>
          <Slot $w={24} $ml={6}><RedoI/></Slot>
          <Slot $w={10} $ml={3}><Caret $c="#2f9a6c"/></Slot>
          <Slot $w={24} $ml={3}><TouchI/></Slot>
          <Slot $w={10} $ml={5}><Caret $c="#fff"/></Slot>
          <Slot $w={24} $ml={8}><PreviewI/></Slot>
          <Slot $w={12} $ml={17}><CustomI/></Slot>
        </Qat>
        <DocTitle>ESTADOS DE RESULTADOS ACME S.A 1..xls  [Modo de compatibilidad]  -  Excel</DocTitle>
        <UserArea>
          <UserName>Saúl Nevárez Argüello</UserName>
          <Avatar><PersonI/></Avatar>
          <WinBtn><RibbonOptI/></WinBtn>
          <WinBtn><MinI/></WinBtn>
          <WinBtn><RestoreI/></WinBtn>
          <WinBtn><CloseI/></WinBtn>
        </UserArea>
      </TitleBar>

      <TabRow>
        <Tab $w={84}>Archivo</Tab>
        <Tab $w={61} $on>Inicio</Tab>
        <Tab $w={77}>Insertar</Tab>
        <Tab $w={174}>Disposición de página</Tab>
        <Tab $w={88}>Fórmulas</Tab>
        <Tab $w={65}>Datos</Tab>
        <Tab $w={75}>Revisar</Tab>
        <Tab $w={58}>Vista</Tab>
        <Tab $w={70}>Ayuda</Tab>
        <TellMe><BulbI/>¿Qué desea hacer?</TellMe>
        <Share><ShareI/>Compartir</Share>
      </TabRow>

      <Ribbon>
        <Clipboard/><GroupSep/>
        <FontGroup/><GroupSep/>
        <AlignGroup/><GroupSep/>
        <NumberGroup/><GroupSep/>
        <StylesGroup/><GroupSep/>
        <CellsGroup/><GroupSep/>
        <EditGroup/><GroupSep/>
        <CollapseArea><Ic w={14} h={8}><path d="M1 7l6-6 6 6" stroke="#666"/></Ic></CollapseArea>
      </Ribbon>

      <FormulaBar>
        <NameBox>F80<Caret/></NameBox>
        <Dots><Ic w={3} h={14}><path d="M1.500 0v3M1.500 5.500v3M1.500 11v3" stroke="#999" strokeWidth="2.400"/></Ic></Dots>
        <FxBox>
          <FxSlot $w={45}><Ic w={15} h={15}><path d="M1 1l13 13M14 1L1 14" stroke="#c4c4c4" strokeWidth="2"/></Ic></FxSlot>
          <FxSlot $w={45}><Ic w={17} h={15}><path d="M1 8l5 6L16 1" stroke="#c4c4c4" strokeWidth="2.400"/></Ic></FxSlot>
          <FxSlot $w={45}><FxGlyph>fx</FxGlyph></FxSlot>
        </FxBox>
        <FormulaInput><Ic w={11} h={7}><path d="M1 6l4.500-4.500L10 6" stroke="#666" strokeWidth="2"/></Ic></FormulaInput>
      </FormulaBar>

      <Work>
        <SheetCol>
          <ColHead>
            <Corner><Ic w={8} h={8}><path d="M8 0v8H0z" fill="#c0c0c0"/></Ic></Corner>
            {COL_HEADS.map(([t, f], i) => <ColCell key={i} $sel={f === 'sel'} $dbl={f === 'dbl'}>{t}</ColCell>)}
          </ColHead>
          <SheetBody>
            <Grid>
              {ROW_NUMS.map((n, i) => <RowHead key={n} $r={i + 1} $small={n >= 100}>{n}</RowHead>)}

              <Banner $c={4} $span={1} $bg="#ebf0de">2,019</Banner>
              <Banner $c={6} $span={3} $bg="#f7f7f7">TEMPORADA BAJA</Banner>
              <Banner $c={9} $span={7} $bg="#b6ffff">TEMPORADA ALTA</Banner>

              <Band $c={4} $bg="#ebf0de" $first/>
              {MONTHS.map((m, i) => <Band key={m.c} $c={m.c} $bg={i < 3 ? '#f7f7f7' : '#b6ffff'} $first={i === 0}/>)}

              <RowLabel $r={4} $s={13.600}>ESTADOS DE RESULTADOS</RowLabel>
              <RowLabel $r={8}>TOTAL GASTOS ADMINISTRATIVOS</RowLabel>
              <RowLabel $r={10}>GASTOS FINANCIEROS</RowLabel>
              <RowLabel $r={12}>TOTAL GASTOS</RowLabel>
              <RowLabel $r={15}>UTILIDAD NETA</RowLabel>

              {[ACUM, ...MONTHS].map(m => (
                <React.Fragment key={m.c}>
                  <MonthCell $c={m.c} $r={4}>{m.n}</MonthCell>
                  <DateCell $c={m.c} $r={6}>{m.d[0]}</DateCell>
                  <DateCell $c={m.c} $r={7}>{m.d[1]}</DateCell>
                  {m.v.map((v, i) => (
                    <Value key={i} $c={m.c} $r={VALUE_ROWS[i]} $neg={v.startsWith('-')}>{v}</Value>
                  ))}
                </React.Fragment>
              ))}
              <FreezeLine/>
            </Grid>
            <ChartFrame><Chart/></ChartFrame>
          </SheetBody>
        </SheetCol>
        <VScroll>
          <VTrack>
            <VBtn $h={17}><Ic w={9} h={5}><path d="M0 5l4.500-5L9 5z" fill="#777"/></Ic></VBtn>
            <VThumb/>
            <VBtn $h={18}><Ic w={9} h={5}><path d="M0 0l4.500 5L9 0z" fill="#777"/></Ic></VBtn>
          </VTrack>
        </VScroll>
      </Work>

      <TabBar>
        <NavSlot $w={10} $ml={25}><Ic w={6} h={10}><path d="M6 0v10L0 5z" fill="#1d6b47"/></Ic></NavSlot>
        <NavSlot $w={10} $ml={20}><Ic w={6} h={10}><path d="M0 0v10l6-5z" fill="#c4c4c4"/></Ic></NavSlot>
        <NavSlot $w={14} $ml={21}>...</NavSlot>
        <SheetTab $w={149} $ml={0} $sep style={{ marginLeft: 7 }}>Multidimensión</SheetTab>
        <SheetTab $w={75} $sep>Ayuda</SheetTab>
        <SheetTab $w={151} $sep>Balance General</SheetTab>
        <SheetTab $w={214} $on>PERDIDAS Y GANACIAS</SheetTab>
        <SheetTab $w={312}>COSTOS DE PRODUCCIÓN TOTALES</SheetTab>
        <TabEndBar/>
        <AddSheet>+</AddSheet>
        <Slot $w={4} $ml={91}><Ic w={3} h={14}><path d="M1.500 0v3M1.500 5.500v3M1.500 11v3" stroke="#999" strokeWidth="2"/></Ic></Slot>
        <HScroll style={{ marginLeft: 16 }}>
          <HEnd><Ic w={5} h={9}><path d="M5 0v9L0 4.500z" fill="#666"/></Ic></HEnd>
          <HThumb/>
          <Slot $w={96}/>
          <HEnd><Ic w={5} h={9}><path d="M0 0v9l5-4.500z" fill="#666"/></Ic></HEnd>
        </HScroll>
      </TabBar>

      <StatusBar>
        <StatusText $ml={10}>Listo</StatusText>
        <StatusText $ml={46}>Calcular</StatusText>
        <ViewBtn $on style={{ marginLeft: 'auto' }}>
          <Ic w={17} h={16}><rect x=".5" y=".5" width="16" height="15" stroke="#777"/><path d="M6 0v16M11 0v16M0 5.500h17M0 10.500h17" stroke="#777"/></Ic>
        </ViewBtn>
        <ViewBtn><Ic w={16} h={18}><rect x=".5" y=".5" width="15" height="17" stroke="#777" fill="#fff"/><path d="M4 5h8M4 8h8M4 11h8M4 14h8" stroke="#777"/></Ic></ViewBtn>
        <ViewBtn><Ic w={17} h={18}><rect x=".5" y=".5" width="16" height="17" stroke="#777" fill="#fff"/><path d="M5 0v10h7V0M0 10h17" stroke="#777"/></Ic></ViewBtn>
        <ZoomWrap>
          <Ic w={9} h={3}><path d="M0 1.500h9" stroke="#555" strokeWidth="1.200"/></Ic>
          <ZoomTrack><ZoomThumb/><ZoomTick/></ZoomTrack>
          <Ic w={9} h={9}><path d="M0 4.500h9M4.500 0v9" stroke="#555" strokeWidth="1.200"/></Ic>
        </ZoomWrap>
        <ZoomPct style={{ alignSelf: 'center', paddingRight: 17 }}>80%</ZoomPct>
      </StatusBar>
      <TaskStrip>
        <TaskPiece $w={345} $ml={46} $c="#ffffff"/>
        <TaskPiece $w={59} $ml={288} $c="#b8703c"/>
        <TaskPiece $w={61} $ml={2} $c="#5c6a70"/>
      </TaskStrip>
    </Page>
  );
}
